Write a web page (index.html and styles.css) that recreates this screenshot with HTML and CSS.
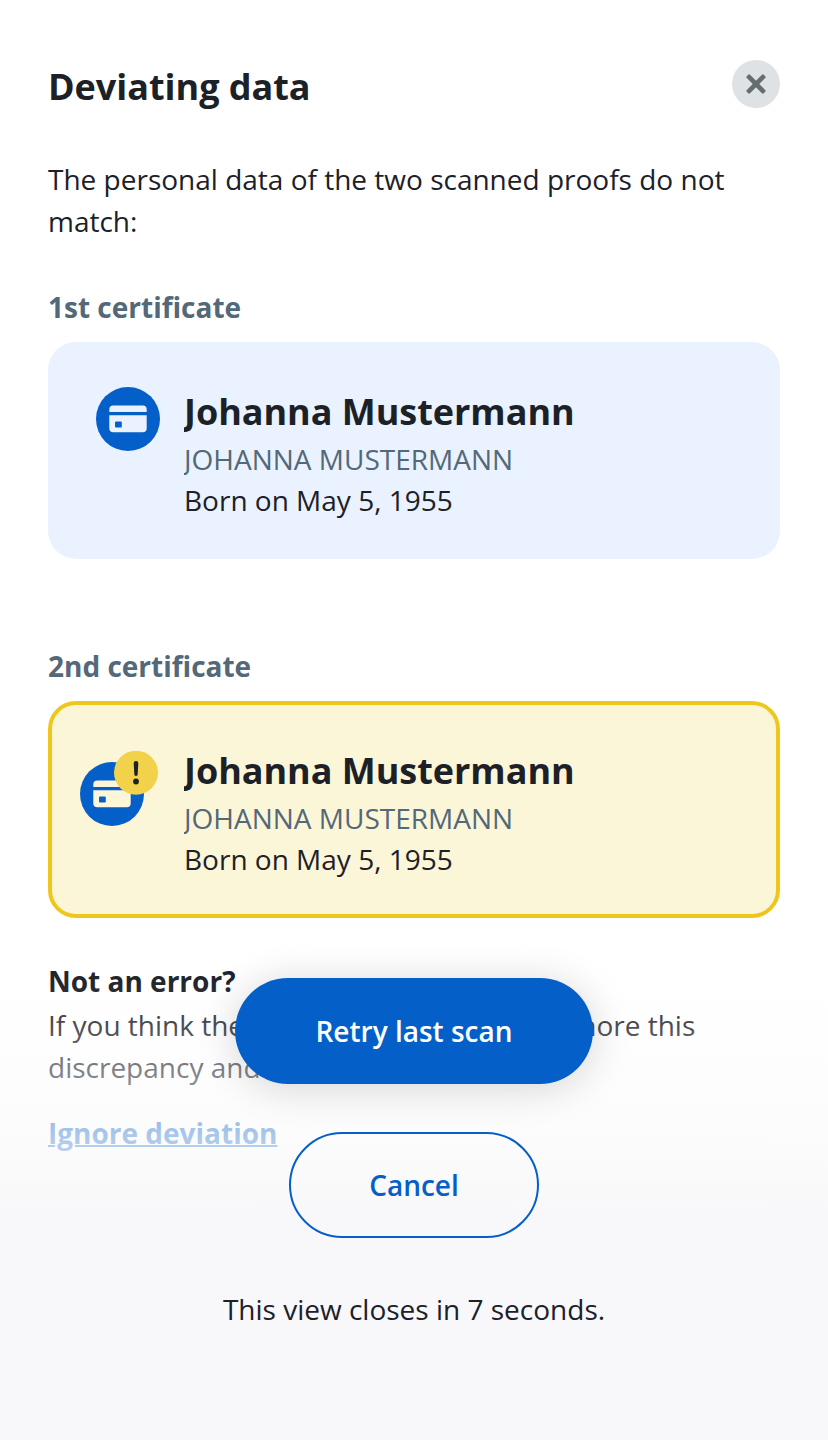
FILE: index.html
```html
<!DOCTYPE html>
<html lang="en">
<head>
<meta charset="utf-8">
<title>Deviating data</title>
<link rel="stylesheet" href="styles.css">
</head>
<body>
<main class="screen">
  <header class="header">
    <h1 class="title">Deviating data</h1>
    <button class="close" aria-label="Close">
      <svg width="48" height="48" viewBox="0 0 48 48">
        <rect x="12" y="21.7" width="24" height="4.6" rx="1.3" transform="rotate(45 24 24)"/>
        <rect x="12" y="21.7" width="24" height="4.6" rx="1.3" transform="rotate(-45 24 24)"/>
      </svg>
    </button>
  </header>
  <p class="intro">The personal data of the two scanned proofs do not match:</p>

  <h2 class="label">1st certificate</h2>
  <section class="card">
    <svg class="icon" width="80" height="76" viewBox="0 0 80 76">
      <circle class="disc" cx="32" cy="44" r="32"/>
      <path class="bank" d="M13.3 37V34.5a4 4 0 0 1 4-4h29.4a4 4 0 0 1 4 4V37z"/>
      <path class="bank" fill-rule="evenodd" d="M13.3 40.3h37.4v13a4 4 0 0 1-4 4H17.3a4 4 0 0 1-4-4zM20 46.5a1 1 0 0 0-1 1v4a1 1 0 0 0 1 1h4.8a1 1 0 0 0 1-1v-4a1 1 0 0 0-1-1z"/>
    </svg>
    <div class="person">
      <h3 class="name">Johanna Mustermann</h3>
      <p class="latin">JOHANNA MUSTERMANN</p>
      <p class="born">Born on May 5, 1955</p>
    </div>
  </section>

  <h2 class="label">2nd certificate</h2>
  <section class="card warning">
    <svg class="icon" width="80" height="76" viewBox="0 0 80 76">
      <circle class="disc" cx="32" cy="44" r="32"/>
      <path class="bank" d="M13.3 37V34.5a4 4 0 0 1 4-4h29.4a4 4 0 0 1 4 4V37z"/>
      <path class="bank" fill-rule="evenodd" d="M13.3 40.3h37.4v13a4 4 0 0 1-4 4H17.3a4 4 0 0 1-4-4zM20 46.5a1 1 0 0 0-1 1v4a1 1 0 0 0 1 1h4.8a1 1 0 0 0 1-1v-4a1 1 0 0 0-1-1z"/>
      <circle class="alert" cx="56" cy="22.7" r="22"/>
      <path class="mark" d="M53.7 13.2a2.3 2.3 0 0 1 4.6 0l-.6 11a1.7 1.7 0 0 1-3.4 0z"/>
      <circle class="mark" cx="56" cy="31.5" r="2.9"/>
    </svg>
    <div class="person">
      <h3 class="name">Johanna Mustermann</h3>
      <p class="latin">JOHANNA MUSTERMANN</p>
      <p class="born">Born on May 5, 1955</p>
    </div>
  </section>

  <section class="hint">
    <h2 class="question">Not an error?</h2>
    <p>If you think the <span class="tight">data is correct, you can</span> ignore this discrepancy and continue.</p>
    <a class="ignore" href="#">Ignore deviation</a>
  </section>

  <footer class="actions">
    <button class="btn primary">Retry last scan</button>
    <button class="btn secondary">Cancel</button>
    <p>This view closes in 7 seconds.</p>
  </footer>
</main>
</body>
</html>
```
FILE: styles.css
```css
* { box-sizing: border-box; margin: 0; padding: 0; }
body {
  font: 28px/42px "Open Sans", "Noto Sans", sans-serif;
  color: #1c2128;
  background: #fff;
}
.screen {
  position: relative;
  width: 828px;
  height: 1440px;
  padding: 60px 48px 0;
  overflow: hidden;
}
.header { display: flex; justify-content: space-between; height: 98px; }
.title { font-size: 36px; line-height: 48px; padding-top: 3px; letter-spacing: -.03px; }
.close {
  width: 48px;
  height: 48px;
  border: 0;
  border-radius: 50%;
  background: #dee2e5;
}
.close svg { display: block; fill: #646e6e; }
.intro { margin-bottom: 44px; }
.label { font-size: 28px; line-height: 42px; color: #536878; margin-bottom: 14px; }
.card {
  display: flex;
  height: 217px;
  padding: 45px 32px 0 48px;
  border-radius: 28px;
  background: #eaf2ff;
  margin-bottom: 86px;
}
.card.warning {
  padding: 41px 28px 0 28px;
  border: 4px solid #efc71c;
  background: #fcf6d9;
  margin-bottom: 42px;
}
.icon { flex: none; margin: -12px 8px 0 0; }
.warning .icon { margin: 4px 24px 0 0; }
.disc { fill: #055fc8; }
.bank { fill: #eaf2ff; }
.warning .bank { fill: #fcf6d9; }
.alert { fill: #f2d24b; }
.mark { fill: #1c2128; }
.person { overflow: hidden; padding-top: 1px; }
.name { font-size: 36px; line-height: 48px; margin-bottom: 3px; letter-spacing: -.03px; }
.latin { line-height: 41px; color: #536878; }
.born { line-height: 41px; }
.question { font-size: 28px; line-height: 42px; margin-bottom: 2px; }
.tight { letter-spacing: -.13px; }
.ignore {
  display: inline-block;
  margin-top: 24px;
  color: #055fc8;
  font-weight: 700;
  text-decoration-thickness: 2px;
}
/* Fading action area that floats over the scrolled content */
.actions {
  position: absolute;
  inset: auto 0 0 0;
  height: 486px;
  padding-top: 24px;
  display: flex;
  flex-direction: column;
  align-items: center;
  background: linear-gradient(rgba(248,248,250,0), rgba(248,248,250,.03) 32px, rgba(250,250,251,.21) 74px, rgba(251,251,252,.43) 114px, rgba(250,250,251,.67) 182px, #f8f8fa 262px);
}
.btn {
  height: 106px;
  border-radius: 53px;
  font: 600 28px/42px "Open Sans", "Noto Sans", sans-serif;
}
.primary {
  width: 358px;
  border: 0;
  color: #fff;
  background: #055fc8;
  box-shadow: 0 4px 40px rgba(0,0,0,.16);
  margin-bottom: 48px;
}
.secondary {
  width: 250px;
  border: 2px solid #055fc8;
  color: #055fc8;
  background: transparent;
  margin-bottom: 50px;
}
```
